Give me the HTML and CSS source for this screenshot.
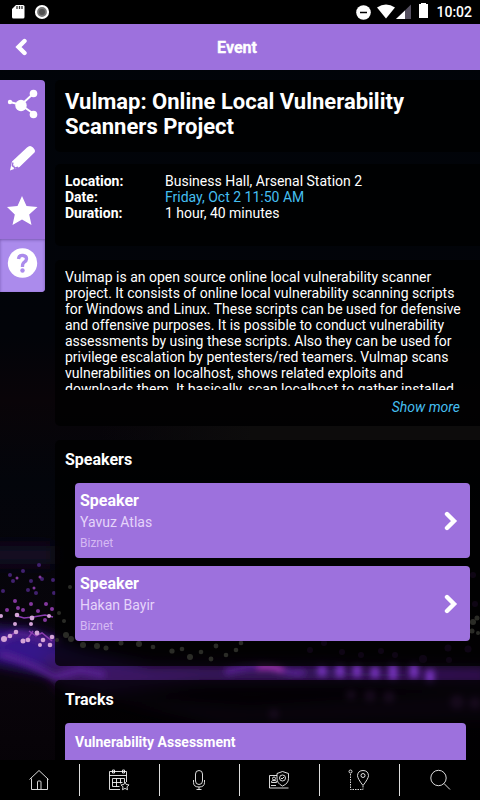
FILE: index.html
```html
<!DOCTYPE html>
<html lang="en">
<head>
<meta charset="utf-8">
<title>Event</title>
<link rel="stylesheet" href="styles.css">
</head>
<body>
<div class="app">
  <svg class="backdrop" viewBox="0 0 480 800" aria-hidden="true">
    <defs>
      <filter id="soft" filterUnits="userSpaceOnUse" x="-40" y="480" width="560" height="320"><feGaussianBlur stdDeviation="7"/></filter>
      <filter id="fine" filterUnits="userSpaceOnUse" x="-40" y="480" width="560" height="320"><feGaussianBlur stdDeviation=".6"/></filter>
      <filter id="glow" filterUnits="userSpaceOnUse" x="-40" y="480" width="560" height="320"><feGaussianBlur stdDeviation="3"/></filter>
      <linearGradient id="base" x2="0" y2="1">
        <stop offset="0" stop-color="#010409"/><stop offset=".42" stop-color="#020409"/>
        <stop offset=".5" stop-color="#090408"/><stop offset=".6" stop-color="#03050b"/>
        <stop offset=".85" stop-color="#09040a"/><stop offset="1" stop-color="#050206"/>
      </linearGradient>
      <linearGradient id="haze"><stop offset="0" stop-color="#0d0c0c" stop-opacity="0"/><stop offset=".4" stop-color="#0d0c0c"/></linearGradient>
    </defs>
    <path fill="url(#base)" d="M0 0h480v800H0z"/>
    <path fill="url(#haze)" d="M100 426h380v14H100z"/>
    <g filter="url(#soft)">
      <path fill="#35158a" d="M-30 626L30 630L80 650L150 664L230 666L330 664L390 672L330 681L150 680L90 684L40 672L-30 658z"/>
      <path fill="#3b1262" d="M40 655L140 664L490 668V682L200 684L100 694L60 688z"/>
      <path fill="#20092f" d="M90 694L250 705L490 690V720L220 726z"/>
      <path fill="#170a28" d="M-10 546h65v18h-65z"/>
    </g>
    <g filter="url(#glow)">
      <path fill="none" stroke="#5a2296" stroke-width="6" d="M0 642Q15 630 30 636T60 641M0 654Q25 660 55 677L80 670L105 675M225 672Q260 663 278 669T305 672"/>
      <g stroke="#7a35c4" stroke-width="8"><path d="M322 666v10M340 665v12M357 665v12M375 667v11M393 664v16M414 664v14M430 670v13"/></g>
      <path fill="none" stroke="#c040c8" stroke-width="4" d="M258 668Q272 665 283 670"/>
    </g>
    <g filter="url(#fine)">
      <g fill="#41206e"><circle cx="10" cy="575" r="2"/><circle cx="23" cy="571" r="2"/><circle cx="39" cy="565" r="2"/><circle cx="31" cy="581" r="2"/><circle cx="13" cy="581" r="2"/><circle cx="3" cy="591" r="2"/><circle cx="28" cy="590" r="2"/><circle cx="36" cy="593" r="2"/><circle cx="42" cy="579" r="2"/><circle cx="53" cy="580" r="2"/><circle cx="54" cy="593" r="2"/></g>
      <g fill="#83389e"><circle cx="15" cy="601" r="2"/><circle cx="31" cy="604" r="2"/><circle cx="46" cy="604" r="2"/><circle cx="7" cy="610" r="2"/><circle cx="23" cy="610" r="2"/><circle cx="38" cy="611" r="2"/><circle cx="18" cy="608" r="2"/><circle cx="52" cy="609" r="2"/><circle cx="45" cy="620" r="2"/><circle cx="17" cy="578" r="1.5"/><circle cx="40" cy="577" r="1.5"/><circle cx="34" cy="588" r="1.5"/></g>
      <path fill="none" stroke="#8a3bb0" stroke-width="1.500" d="M17 616l7 2 9-1 12-2 8 2M29 631l7 5 6-3 10 8M2 640l8-4 6-4M23 641l6-4 4-6"/>
      <g fill="#d4a4d7"><circle cx="1" cy="616" r="2"/><circle cx="17" cy="615" r="2.300"/><circle cx="32" cy="618" r="2.400"/><circle cx="49" cy="616" r="2"/><circle cx="15" cy="624" r="2"/><circle cx="31" cy="624" r="2"/><circle cx="16" cy="632" r="2.300"/><circle cx="4" cy="639" r="3"/><circle cx="10" cy="636" r="2.300"/><circle cx="23" cy="641" r="2.500"/><circle cx="28" cy="640" r="2.300"/><circle cx="37" cy="633" r="2.400"/><circle cx="43" cy="640" r="2.300"/><circle cx="52" cy="637" r="2.300"/><circle cx="50" cy="645" r="2.300"/><circle cx="40" cy="645" r="2"/></g>
      <g fill="#a9ad98"><circle cx="59" cy="613" r="2"/><circle cx="64" cy="621" r="2"/><circle cx="70" cy="587" r="2"/><circle cx="57" cy="640" r="2"/><circle cx="66" cy="635" r="3"/><circle cx="71" cy="639" r="3"/><circle cx="83" cy="645" r="3"/><circle cx="97" cy="646" r="3"/><circle cx="106" cy="648" r="2.500"/><circle cx="121" cy="643" r="2.500"/><circle cx="139" cy="644" r="3"/><circle cx="153" cy="647" r="2.300"/><circle cx="172" cy="651" r="2.600"/><circle cx="182" cy="649" r="2.300"/><circle cx="190" cy="657" r="3"/><circle cx="201" cy="652" r="2.300"/><circle cx="211" cy="659" r="2.400"/><circle cx="216" cy="646" r="2.400"/><circle cx="226" cy="655" r="2.300"/><circle cx="236" cy="650" r="2.300"/><circle cx="241" cy="643" r="2.300"/><circle cx="473" cy="622" r="3"/><circle cx="477" cy="618" r="2.500"/><circle cx="472" cy="631" r="2.500"/><circle cx="478" cy="633" r="2"/></g>
      <g fill="#3a1850"><circle cx="310" cy="650" r="3"/><circle cx="324" cy="643" r="3"/><circle cx="342" cy="652" r="3"/><circle cx="361" cy="655" r="3"/><circle cx="381" cy="651" r="3"/><circle cx="395" cy="655" r="3"/><circle cx="423" cy="659" r="4"/><circle cx="448" cy="648" r="3.500"/><circle cx="468" cy="649" r="3.500"/><circle cx="449" cy="660" r="3"/><circle cx="473" cy="575" r="3"/><circle cx="475" cy="604" r="3"/></g>
    </g>
    <g filter="url(#glow)" fill="#5b2b72"><circle cx="351" cy="695" r="5"/><circle cx="370" cy="696" r="6"/><circle cx="389" cy="697" r="6"/><circle cx="457" cy="702" r="7"/><circle cx="475" cy="703" r="6"/><circle cx="274" cy="714" r="5"/></g>
  </svg>

  <header class="status">
    <div class="status-left">
      <svg width="14" height="16" viewBox="0 0 14 16"><path fill="#fff" d="M5 1h7q1.500 0 1.500 1.500V13q0 1.500-1.500 1.500H2.500Q1 14.500 1 13V5z"/><path stroke="#333" stroke-width="1.300" d="M6 2v3M8.500 2v3M11 2v3"/></svg>
      <svg width="16" height="16" viewBox="0 0 16 16"><circle cx="8" cy="8" r="6" fill="#777" stroke="#fff" stroke-width="2.200"/><circle cx="8" cy="8" r="3" fill="#505050"/></svg>
    </div>
    <div class="status-right">
      <svg width="74" height="18" viewBox="0 0 74 18"><circle cx="8.500" cy="9.500" r="7.300" fill="#fff"/><path stroke="#000" stroke-width="1.500" d="M5 9.500h7"/><path fill="#fff" d="M22 4.500Q31-1.500 40 4.500L31 15.500z"/><path fill="#555060" d="M56 1.500V16H41z"/><path fill="#fff" d="M50 7.500V16h-9z"/><path fill="#fff" d="M66 0h5v1h2v14h-9V1h2z"/></svg>
      <span class="clock">10:02</span>
    </div>
  </header>

  <div class="titlebar">
    <svg class="back" width="12" height="18" viewBox="0 0 12 18"><path d="M9.500 3L3.500 9l6 6"/></svg>
    <span class="bar-title">Event</span>
  </div>

  <div class="main">
    <nav class="tools">
      <div class="tool tool-share"><svg width="32" height="32" viewBox="0 0 32 32"><path fill="none" stroke="#fff" stroke-width="2" d="M3 13l11 3L27 4M14 16l13 9"/><g fill="#fff"><circle cx="3" cy="13" r="2.200"/><circle cx="14" cy="16.500" r="5.700"/><circle cx="26.500" cy="4.500" r="3.800"/><circle cx="26.500" cy="25.500" r="3.800"/></g></svg></div>
      <div class="tool tool-edit"><svg width="32" height="32" viewBox="0 0 32 32"><path fill="#fff" d="M3 28.500l2-9L20 5.500q3-3 6 0 3 3 1.500 5L12.500 25z"/><path fill="none" stroke="#9d71dd" stroke-width="1.300" d="M6 20.500l-.7 3q0 1 1.500.7l.7 2 3.500-1"/></svg></div>
      <div class="tool tool-star"><svg width="32" height="32" viewBox="0 0 32 32"><path fill="#fff" d="M15 1l4.500 10 11 1-8.300 7.500L24.500 30 15 24.500 5.500 30l2.300-10.500L0 12l10.500-1z"/></svg></div>
      <div class="tool tool-active"><svg width="32" height="32" viewBox="0 0 32 32"><circle cx="15.500" cy="16" r="14.700" fill="#fff"/><path fill="none" stroke="#ab8bec" stroke-width="3.300" d="M11.500 12q.5-4 4.500-3.500 3.700.5 3.500 3.500-.2 2-2.200 3.200T15.500 20"/><circle cx="15.500" cy="23.500" r="2.200" fill="#ab8bec"/></svg></div>
    </nav>
    <main class="content">
      <section class="card heading"><h1>Vulmap: Online Local Vulnerability Scanners Project</h1></section>
      <section class="card facts">
        <dl>
          <dt>Location:</dt><dd>Business Hall, Arsenal Station 2</dd>
          <dt>Date:</dt><dd class="link">Friday, Oct 2 11:50 AM</dd>
          <dt>Duration:</dt><dd>1 hour, 40 minutes</dd>
        </dl>
      </section>
      <section class="card about">
        <div class="excerpt">Vulmap is an open source online local vulnerability scanner<br>project. It consists of online local vulnerability scanning scripts<br>for Windows and Linux. These scripts can be used for defensive<br>and offensive purposes. It is possible to conduct vulnerability<br>assessments by using these scripts. Also they can be used for<br>privilege escalation by pentesters/red teamers. Vulmap scans<br>vulnerabilities on localhost, shows related exploits and<br>downloads them. It basically, scan localhost to gather installed</div>
        <div class="more">Show more</div>
      </section>
      <section class="card speakers">
        <h2>Speakers</h2>
        <article class="speaker">
          <div><div class="role">Speaker</div><div class="name">Yavuz Atlas</div><div class="org">Biznet</div></div>
          <svg width="14" height="20" viewBox="0 0 14 20"><path d="M3 3l7 7-7 7"/></svg>
        </article>
        <article class="speaker">
          <div><div class="role">Speaker</div><div class="name">Hakan Bayir</div><div class="org">Biznet</div></div>
          <svg width="14" height="20" viewBox="0 0 14 20"><path d="M3 3l7 7-7 7"/></svg>
        </article>
      </section>
      <section class="card tracks">
        <h2>Tracks</h2>
        <div class="track">Vulnerability Assessment</div>
      </section>
    </main>
  </div>

  <footer class="tabs">
    <div class="tab"><svg viewBox="0 0 22 22"><path d="M1.500 10.500L11 1.500l9.500 9M3.500 9.500v11h16v-11M9.500 20v-7q0-1 1-1h1.500q1 0 1 1v7"/></svg></div>
    <div class="tab"><svg viewBox="0 0 22 22"><path d="M12 20.500H1.500V2.500h17V13M1.500 6.500h17M4.500 1v3h2V1zM14.500 1v3h2V1zM4.500 9.500h12v4M4.500 9.500v8h7M4.500 13.500h10M8.500 9.500v8M12.500 9.500v5M17 13l1.200 2.500 2.800.4-2 2 .5 2.800-2.500-1.300-2.500 1.300.5-2.800-2-2 2.800-.4z"/></svg></div>
    <div class="tab"><svg viewBox="0 0 22 22"><rect x="7.500" y="1.500" width="7" height="14" rx="3.500"/><path d="M5.500 11v2.500q0 4.500 5.500 4.500t5.500-4.500V11M11 18v2.500M8.500 20.500h5"/></svg></div>
    <div class="tab"><svg viewBox="0 0 22 22"><path d="M9 6.500H1.500v12.500h19M3.500 13.500v-1q0-1 2.500-1t2.500 1v1zM3 16.500h5"/><circle cx="6" cy="9.500" r="1.500"/><path d="M14.500 2.500l6 2v5q0 5-6 7.500-5.500-2.500-5.500-7.500v-5z"/><circle cx="14.500" cy="9" r="3"/><path d="M13 9l1 1 2-2"/></svg></div>
    <div class="tab"><svg viewBox="0 0 22 22"><circle cx="2.500" cy="2.500" r="1.500"/><path stroke-dasharray="1.500 1" d="M2.500 5v15.500h12.500v-4"/><path d="M15 16.500Q9.500 9.500 9.500 6.500 10 1.500 15 1.500t5.500 5q0 3-5.500 10z"/><circle cx="15" cy="6.500" r="2"/></svg></div>
    <div class="tab tab-search"><svg viewBox="0 0 22 22"><circle cx="9.500" cy="9" r="7.700"/><path d="M15 14.500l6 6"/></svg></div>
  </footer>
</div>
</body>
</html>
```
FILE: styles.css
```css
* { box-sizing: border-box; }
body { margin: 0; background: #000; color: #fff; font-family: Roboto, "Liberation Sans", sans-serif; font-size: 14px; line-height: 16px; }
svg { display: block; }
.app { position: relative; width: 480px; height: 800px; overflow: hidden; display: flex; flex-direction: column; isolation: isolate; }
.backdrop { position: absolute; inset: 0; width: 480px; height: 800px; z-index: -1; }
.status { height: 24px; flex: none; display: flex; justify-content: space-between; background: #000; padding: 0 8px 0 11px; }
.status-left { display: flex; gap: 9px; padding-top: 4px; }
.status-right { display: flex; gap: 7px; padding-top: 3px; }
.clock { font-size: 14px; font-weight: 500; line-height: 18px; }
.titlebar { height: 46px; flex: none; display: grid; grid-template-columns: 40px 1fr 46px; align-items: center; background: #9d71dd; }
.back { margin-left: 15px; }
.back path, .speaker path { fill: none; stroke: #fff; stroke-width: 4.400; stroke-linecap: round; }
.bar-title { text-align: center; font-size: 16px; font-weight: 700; padding-top: 1px; -webkit-text-stroke: .3px #fff; }
.main { flex: 1; min-height: 0; overflow: hidden; display: flex; align-items: flex-start; gap: 10px; padding-top: 10px; }
.tools { width: 45px; flex: none; background: #9d71dd; border-radius: 0 4px 4px 0; overflow: hidden; }
.tool { height: 53px; display: flex; align-items: center; padding-left: 7px; }
.tool-share, .tool-edit { padding-bottom: 3px; }
.tool-star { padding-bottom: 4px; }
.tool-active { background: #ab8bec; box-shadow: inset 0 1px 3px rgba(70, 40, 120, .5); padding-bottom: 5px; }
.content { flex: 1; min-width: 0; }
.card { background: rgba(0, 0, 0, .75); border-radius: 5px 0 0 5px; padding-left: 10px; }
.heading { height: 72px; padding-top: 9px; margin-bottom: 12px; }
h1 { margin: 0; font-size: 22px; line-height: 25px; font-weight: 700; }
.facts { height: 82px; padding-top: 9px; margin-bottom: 14px; }
dl { margin: 0; display: grid; grid-template-columns: 100px 1fr; }
dt { font-weight: 700; }
dd { margin: 0; }
.link, .more { color: #45bff0; }
.about { height: 166px; padding-top: 9px; margin-bottom: 14px; }
.excerpt { height: 121px; overflow: hidden; white-space: nowrap; }
.more { margin-top: 9px; padding-right: 20px; text-align: right; font-style: italic; }
.speakers { height: 226px; padding: 10px 10px 0; margin-bottom: 14px; }
h2 { margin: 0; font-size: 16px; line-height: 19px; font-weight: 700; }
.speaker { height: 75px; margin: 14px 0 0 10px; padding: 8px 12px 0 5px; background: #9d71dd; border-radius: 4px; display: flex; justify-content: space-between; }
.speaker + .speaker { margin-top: 8px; }
.speaker svg { margin-top: 20px; }
.role { font-size: 16px; line-height: 20px; font-weight: 700; }
.name { line-height: 16px; margin-top: 3px; color: #e5d4fa; }
.org { font-size: 12px; line-height: 14px; margin-top: 6px; color: #d5b9f3; }
.tracks { height: 120px; padding: 10px 14px 0 10px; }
.track { height: 75px; margin-top: 14px; padding: 11px 10px; background: #9d71dd; border-radius: 4px; font-weight: 700; }
.tabs { height: 40px; flex: none; background: #000; display: grid; grid-template-columns: repeat(6, 1fr); padding: 4px 0; }
.tab { display: flex; align-items: center; justify-content: center; border-right: 1px solid #ddd; padding-right: 1px; }
.tab:last-child { border: 0; }
.tab svg { width: 22px; height: 22px; fill: none; stroke: #fff; stroke-width: .85; }
```
